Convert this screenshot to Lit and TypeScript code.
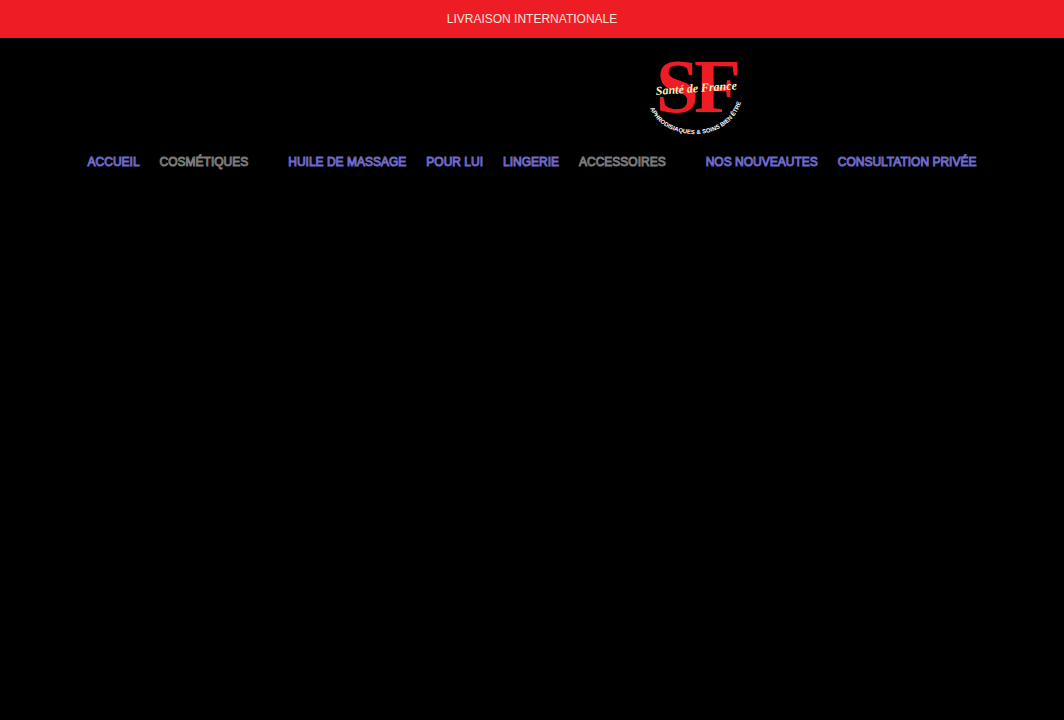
import { LitElement, html, css } from "lit";
import { customElement } from "lit/decorators.js";

interface NavItem {
  label: string;
  menu?: boolean;
}

const items: NavItem[] = [
  { label: "ACCUEIL" },
  { label: "COSMÉTIQUES", menu: true },
  { label: "HUILE DE MASSAGE" },
  { label: "POUR LUI" },
  { label: "LINGERIE" },
  { label: "ACCESSOIRES", menu: true },
  { label: "NOS NOUVEAUTES" },
  { label: "CONSULTATION PRIVÉE" },
];

@customElement("app-root")
export class AppRoot extends LitElement {
  static styles = css`
    :host {
      display: block;
      min-height: 100vh;
      background: #000;
      font-family: "Liberation Sans", Arial, sans-serif;
      font-size: 12px;
      line-height: 18px;
    }
    .announcement {
      background: #ee1d25;
      color: #ffe0d8;
      text-align: center;
      padding: 10px 16px;
    }
    .brand {
      display: flex;
      padding: 20px 0 15px 60.5%;
    }
    .logo {
      display: block;
      width: 102px;
      height: 80px;
      overflow: visible;
    }
    .nav {
      display: flex;
      flex-wrap: wrap;
      justify-content: center;
      column-gap: 20px;
    }
    .item {
      color: #000;
      text-decoration: none;
      -webkit-text-stroke: 1px #7c7c7c;
    }
    a.item {
      -webkit-text-stroke: 1px #706acb;
    }
    button.item {
      border: 0;
      background: none;
      font: inherit;
      padding: 0 20px 0 0;
    }
    .initials {
      font: bold 77px "Liberation Serif", serif;
      fill: #ee1d25;
    }
    .script {
      font: italic bold 12px "Liberation Serif", cursive;
      fill: #fff0bd;
    }
    .tagline {
      font: bold 6px "Liberation Sans", sans-serif;
      fill: #fff;
    }
  `;

  render() {
    return html`
      <div class="announcement">LIVRAISON INTERNATIONALE</div>
      <header>
        <div class="brand">
          <a href="#" aria-label="Santé de France">
            <svg class="logo" viewBox="0 0 102 80">
              <defs><path id="arc" d="M4 38 C4 60 24 76 51 76 C78 76 98 58 99 32" /></defs>
              <text class="initials" x="12" y="54">S</text>
              <text class="initials" x="50" y="54">F</text>
              <text class="script" x="12" y="37" transform="rotate(-4 12 37)">Santé de France</text>
              <text class="tagline">
                <textPath href="#arc" startOffset="50%" text-anchor="middle">APHRODISIAQUES &amp; SOINS BIEN ÊTRE</textPath>
              </text>
            </svg>
          </a>
        </div>
        <nav class="nav">
          ${items.map((i) =>
            i.menu
              ? html`<button class="item" type="button">${i.label}</button>`
              : html`<a class="item" href="#">${i.label}</a>`
          )}
        </nav>
      </header>
    `;
  }
}
